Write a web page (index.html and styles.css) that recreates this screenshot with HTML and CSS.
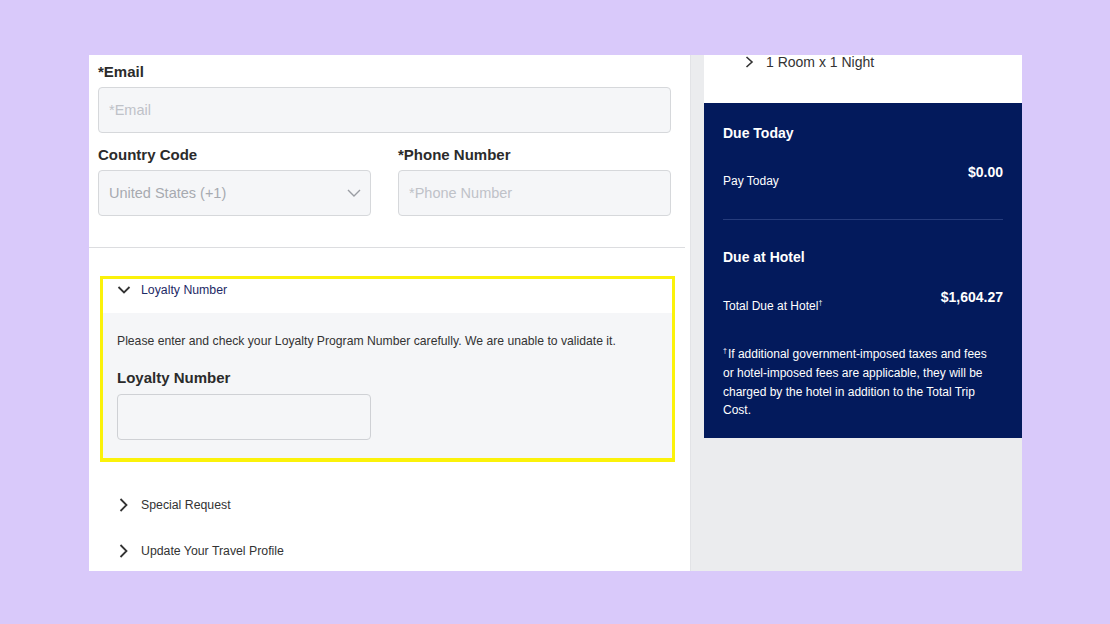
FILE: index.html
```html
<!DOCTYPE html>
<html lang="en">
<head>
    <meta charset="UTF-8">
    <meta name="viewport" content="width=device-width, initial-scale=1.0">
    <title>Guest Details</title>
    <link rel="stylesheet" href="styles.css">
</head>

<body>
    <div class="frame">
        <div class="main-panel">
            <div class="contact-form">
                <label class="field-label" for="email">*Email</label>
                <input class="text-input" id="email" type="text" placeholder="*Email">

                <div class="field-row">
                    <div class="field">
                        <label class="field-label">Country Code</label>
                        <div class="select-box">
                            <span>United States (+1)</span>
                            <svg width="14" height="8" viewBox="0 0 14 8"><polyline points="1,1 7,7 13,1" fill="none" stroke="#9a9da3" stroke-width="1.4"/></svg>
                        </div>
                    </div>
                    <div class="field">
                        <label class="field-label" for="phone">*Phone Number</label>
                        <input class="text-input" id="phone" type="text" placeholder="*Phone Number">
                    </div>
                </div>
            </div>

            <hr class="divider">

            <!-- bloque resaltado -->
            <div class="loyalty-box">
                <div class="accordion-head">
                    <svg class="chev" width="14" height="8" viewBox="0 0 14 8"><polyline points="1.5,1 7,6.5 12.5,1" fill="none" stroke="#333" stroke-width="1.8"/></svg>
                    <span class="head-link">Loyalty Number</span>
                </div>
                <div class="accordion-body">
                    <p class="note">Please enter and check your Loyalty Program Number carefully. We are unable to validate it.</p>
                    <label class="field-label" for="loyalty">Loyalty Number</label>
                    <input class="text-input loyalty-input" id="loyalty" type="text">
                </div>
            </div>

            <div class="accordion-row">
                <svg class="chev" width="14" height="14" viewBox="0 0 14 14"><polyline points="3.5,1 9.5,7 3.5,13" fill="none" stroke="#333" stroke-width="1.8"/></svg>
                <span>Special Request</span>
            </div>
            <div class="accordion-row">
                <svg class="chev" width="14" height="14" viewBox="0 0 14 14"><polyline points="3.5,1 9.5,7 3.5,13" fill="none" stroke="#333" stroke-width="1.8"/></svg>
                <span>Update Your Travel Profile</span>
            </div>
        </div>

        <div class="side-panel">
            <div class="room-card">
                <svg width="9" height="12" viewBox="0 0 9 12"><polyline points="1.5,1 7,6 1.5,11" fill="none" stroke="#333" stroke-width="1.6"/></svg>
                <span>1 Room x 1 Night</span>
            </div>

            <div class="summary-card">
                <h3 class="summary-title">Due Today</h3>
                <div class="summary-row">
                    <span class="summary-label">Pay Today</span>
                    <span class="summary-amount">$0.00</span>
                </div>

                <hr class="summary-divider">

                <h3 class="summary-title">Due at Hotel</h3>
                <div class="summary-row row-hotel">
                    <span class="summary-label">Total Due at Hotel<span class="dagger">†</span></span>
                    <span class="summary-amount">$1,604.27</span>
                </div>
                <p class="footnote"><span class="dagger">†</span>If additional government-imposed taxes and fees or hotel-imposed fees are applicable, they will be charged by the hotel in addition to the Total Trip Cost.</p>
            </div>
        </div>
    </div>
</body>
</html>
```

FILE: styles.css
```css
body
{
    margin: 0;
    background-color: #d9c9fa;
    font-family: "Liberation Sans", Arial, sans-serif;
    color: #333;
}

.frame
{
    display: flex;
    width: 933px;
    height: 516px;
    margin: 55px 0 0 89px;
    overflow: hidden;
}

.main-panel
{
    width: 601px;
    flex-shrink: 0;
    background-color: #fff;
}

.contact-form
{
    padding: 8px 19px 0 9px;
}

.field-label
{
    display: block;
    font-size: 15px;
    font-weight: bold;
    line-height: 18px;
    color: #2b2b2b;
    margin-bottom: 6px;
}

.text-input
{
    display: block;
    box-sizing: border-box;
    width: 100%;
    height: 46px;
    padding: 0 10px;
    background-color: #f5f6f8;
    border: 1px solid #d6d8db;
    border-radius: 4px;
    font-family: inherit;
    font-size: 14.5px;
    color: #333;
}

.text-input::placeholder
{
    color: #bfc2c8;
}

.field-row
{
    display: grid;
    grid-template-columns: 273px 273px;
    column-gap: 27px;
    margin-top: 13px;
}

.select-box
{
    box-sizing: border-box;
    height: 46px;
    padding: 0 9px 0 10px;
    display: flex;
    align-items: center;
    justify-content: space-between;
    background-color: #f5f6f8;
    border: 1px solid #d6d8db;
    border-radius: 4px;
    font-size: 14.5px;
    color: #a7aab0;
}

.divider
{
    border: none;
    border-top: 1px solid #dcdde0;
    margin: 31px 5px 0 0;
}

.loyalty-box
{
    margin: 28px 15px 0 11px;
    border: 3px solid #fbf20a;
    border-bottom-width: 4px;
}

.accordion-head
{
    height: 34px;
    display: flex;
    align-items: flex-start;
    padding-left: 14px;
    line-height: 22px;
}

.chev
{
    flex-shrink: 0;
    margin-right: 10px;
}

.accordion-head .chev
{
    margin-top: 7px;
}

.head-link
{
    font-size: 12.3px;
    color: #1d2a66;
}

.accordion-body
{
    background-color: #f5f6f8;
    padding: 20px 14px 18px;
}

.note
{
    margin: 0 0 20px;
    font-size: 12.2px;
    line-height: 16px;
    color: #333;
}

.loyalty-box .field-label
{
    margin-bottom: 7px;
}

.loyalty-input
{
    width: 254px;
    border-color: #cfd1d5;
}

.accordion-row
{
    height: 46px;
    display: flex;
    align-items: center;
    padding-left: 28px;
    font-size: 12.3px;
    color: #333;
}

.loyalty-box + .accordion-row
{
    margin-top: 20px;
}

.side-panel
{
    flex: 1;
    background-color: #ebecee;
    border-left: 1px solid #e2e3e6;
    padding-left: 13px;
}

.room-card
{
    height: 48px;
    background-color: #fff;
    display: flex;
    align-items: flex-start;
    padding-left: 41px;
    font-size: 14px;
    line-height: 14px;
    color: #333;
}

.room-card svg
{
    margin-right: 12px;
    margin-top: 1px;
}

.summary-card
{
    background-color: #031a5c;
    color: #fff;
    padding: 21px 19px 18px;
}

.summary-title
{
    margin: 0;
    font-size: 14px;
    line-height: 18px;
    font-weight: bold;
}

.summary-row
{
    display: flex;
    justify-content: space-between;
    align-items: flex-start;
    margin-top: 21px;
}

.row-hotel
{
    margin-top: 22px;
}

.summary-label
{
    padding-top: 9px;
    font-size: 12px;
    line-height: 18px;
}

.summary-amount
{
    font-size: 14px;
    font-weight: bold;
    line-height: 18px;
}

.dagger
{
    font-size: 7px;
    line-height: 0;
    vertical-align: 5px;
    margin-right: 1px;
}

.summary-divider
{
    border: none;
    border-top: 1px solid #263c7c;
    margin: 29px 0 28px;
}

.footnote
{
    margin: 30px 0 0;
    padding-right: 8px;
    font-size: 12px;
    line-height: 18.8px;
}
```
